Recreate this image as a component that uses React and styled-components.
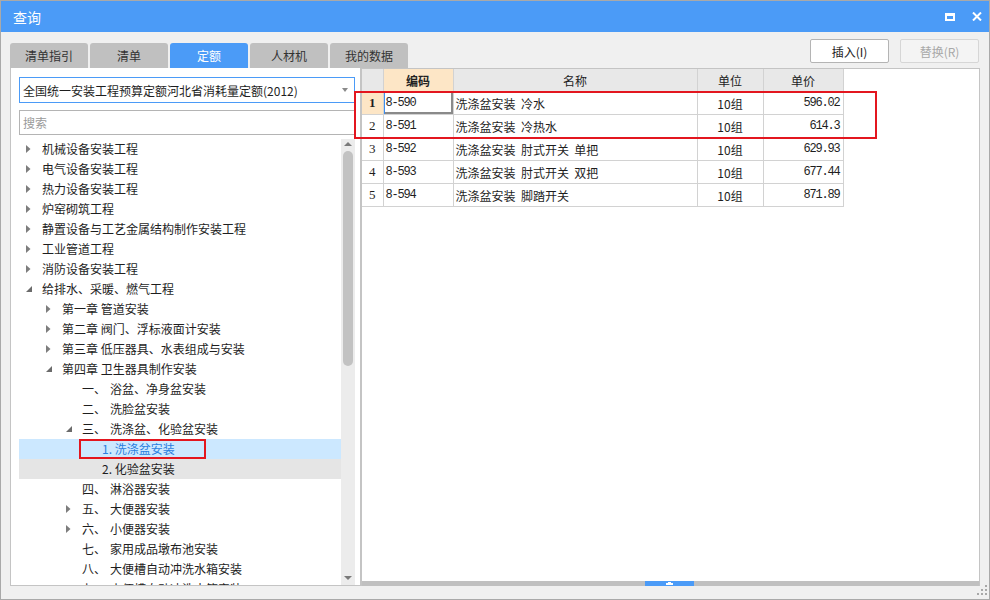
import styled, { createGlobalStyle } from "styled-components";

const GlobalStyle = createGlobalStyle`
  html, body {
    margin: 0;
    padding: 0;
    background: #fff;
  }
  body {
    font-family: "Noto Sans CJK SC", "Noto Sans", sans-serif;
    font-size: 12px;
    color: #1e1e1e;
  }
`;

const BLUE = "#4b9bf7";

const Window = styled.div`
  position: relative;
  width: 990px;
  height: 600px;
  box-sizing: border-box;
  border: 1px solid #a9a9a9;
  background: #f0f0f0;
  display: flex;
  flex-direction: column;
`;

const TitleBar = styled.div`
  height: 31px;
  flex-shrink: 0;
  background: ${BLUE};
  color: #fff;
  display: flex;
  align-items: center;
  justify-content: space-between;
  padding: 0 7px 0 12px;
  font-size: 14px;
`;

const TitleIcons = styled.div`
  display: flex;
  align-items: center;
  gap: 17px;
`;

const Body = styled.div`
  flex: 1;
  display: grid;
  grid-template-columns: 351px 619px;
  grid-template-rows: 36px 518px;
  padding: 0 8px 13px 9px;
`;

const Tabs = styled.div`
  display: flex;
  align-items: flex-end;
  gap: 2px;
  position: relative;
  z-index: 1;
`;

const Tab = styled.div`
  flex-shrink: 0;
  width: 78px;
  height: 25px;
  border-radius: 3px 3px 0 0;
  background: ${(p) => (p.$active ? BLUE : "#c0c0c0")};
  color: ${(p) => (p.$active ? "#fff" : "#333")};
  display: flex;
  align-items: center;
  justify-content: center;
  font-size: 12px;
`;

const Actions = styled.div`
  display: flex;
  justify-content: flex-end;
  align-items: flex-start;
  gap: 11px;
  padding: 7px 1px 0 0;
`;

const Button = styled.div`
  width: 79px;
  height: 24px;
  box-sizing: border-box;
  border: 1px solid ${(p) => (p.disabled ? "#d6d6d6" : "#b4b4b4")};
  border-radius: 2px;
  background: ${(p) => (p.disabled ? "#f4f4f4" : "#fff")};
  color: ${(p) => (p.disabled ? "#a8a8a8" : "#222")};
  display: flex;
  align-items: center;
  justify-content: center;
  font-size: 12px;
`;

const LeftPanel = styled.div`
  background: #fff;
  border: 1px solid #c4c4c4;
  border-top: none;
  display: flex;
  flex-direction: column;
  padding: 9px 5px 0 8px;
  min-height: 0;
`;

const Select = styled.div`
  height: 26px;
  box-sizing: border-box;
  border: 1px solid ${BLUE};
  display: flex;
  align-items: center;
  justify-content: space-between;
  padding: 0 6px 0 3px;
  font-size: 12px;
`;

const Caret = styled.span`
  width: 0;
  height: 0;
  border-left: 3.5px solid transparent;
  border-right: 3.5px solid transparent;
  border-top: 4px solid #8a8a8a;
`;

const Search = styled.input`
  margin-top: 7px;
  height: 25px;
  box-sizing: border-box;
  border: 1px solid #b4b4b4;
  padding: 0 3px;
  font-family: inherit;
  font-size: 12px;
  outline: none;
  &::placeholder {
    color: #9a9a9a;
  }
`;

const TreeArea = styled.div`
  margin-top: 4px;
  flex: 1;
  display: flex;
  min-height: 0;
  overflow: hidden;
`;

const TreeList = styled.div`
  flex: 1;
  overflow: hidden;
`;

const Row = styled.div`
  position: relative;
  height: 20px;
  display: flex;
  align-items: center;
  padding-left: ${(p) => p.$level * 20}px;
  background: ${(p) => (p.$selected ? "#cce8ff" : p.$hover ? "#e5e5e5" : "transparent")};
  color: ${(p) => (p.$selected ? "#2b7fe0" : "#1e1e1e")};
  white-space: nowrap;
  line-height: 20px;
`;

const Toggle = styled.span`
  width: 23px;
  height: 20px;
  flex-shrink: 0;
  display: flex;
  align-items: center;
  padding-left: 7px;
  box-sizing: border-box;
`;

const Prefix = styled.span`
  margin-right: 4px;
`;

const Marker = styled.div`
  position: absolute;
  left: 60px;
  top: 0;
  width: 127px;
  height: 20px;
  box-sizing: border-box;
  border: 2px solid #e3161f;
`;

const ScrollBar = styled.div`
  width: 14px;
  background: #ececec;
  display: flex;
  flex-direction: column;
  align-items: center;
`;

const Arrow = styled.span`
  width: 0;
  height: 0;
  border-left: 4px solid transparent;
  border-right: 4px solid transparent;
  ${(p) =>
    p.$down
      ? "border-top: 4px solid #7a7a7a; margin-bottom: 5px; margin-top: auto;"
      : "border-bottom: 4px solid #7a7a7a; margin-top: 3px;"}
`;

const Thumb = styled.div`
  margin-top: 5px;
  width: 10px;
  height: 215px;
  border-radius: 5px;
  background: #c2c2c2;
`;

const RightPanel = styled.div`
  position: relative;
  background: #fff;
  border: 1px solid #c4c4c4;
  border-bottom: none;
  display: flex;
  flex-direction: column;
  min-height: 0;
`;

const TableWrap = styled.div`
  flex: 1;
`;

const Grid = styled.table`
  border-collapse: collapse;
  table-layout: fixed;
  width: 481px;
  font-size: 12px;
`;

const Th = styled.th`
  height: 22px;
  padding: 0;
  border: 1px solid #d2d2d2;
  border-top: none;
  background: ${(p) => (p.$active ? "#fde6c6" : "#e8e8e8")};
  font-weight: ${(p) => (p.$active ? "bold" : "normal")};
  color: #222;
  &:first-child {
    border-left: none;
  }
`;

const Td = styled.td`
  height: 22px;
  padding: 0 ${(p) => (p.$align === "right" ? "3px" : "0")} 0 ${(p) => (p.$align === "left" ? "2px" : "0")};
  border: 1px solid #d2d2d2;
  text-align: ${(p) => p.$align || "center"};
  white-space: pre;
  overflow: hidden;
  box-shadow: ${(p) => (p.$focus ? "inset 1px 0 0 #3d8ef0, inset -2px -2px 0 #8a8a8a" : "none")};
  font-family: ${(p) => (p.$mono ? '"Liberation Mono", monospace' : "inherit")};
  font-size: 12px;
  letter-spacing: ${(p) => (p.$mono ? "-1.2px" : "0")};
`;

const NumCell = styled.td`
  height: 22px;
  padding: 0;
  border: 1px solid #d2d2d2;
  border-left: none;
  text-align: center;
  font-family: "Liberation Serif", serif;
  font-size: 13px;
  font-weight: ${(p) => (p.$active ? "bold" : "normal")};
  background: ${(p) => (p.$active ? "#fde6c6" : "#fff")};
`;

const GridMarker = styled.div`
  position: absolute;
  left: -8px;
  top: 22px;
  width: 523px;
  height: 48px;
  box-sizing: border-box;
  border: 2px solid #e3161f;
`;

const Splitter = styled.div`
  height: 5px;
  background: #c0c0c0;
  display: flex;
`;

const SplitHandle = styled.div`
  margin-left: 283px;
  width: 49px;
  background: ${BLUE};
  display: flex;
  align-items: center;
  justify-content: center;
`;

const Grip = styled.svg`
  position: absolute;
  right: 1px;
  bottom: 3px;
`;

const Collapsed = () => (
  <svg width="5" height="8" viewBox="0 0 5 8">
    <path d="M0 0 L4.5 4 L0 8 Z" fill="#7d7d7d" />
  </svg>
);

const Expanded = () => (
  <svg width="6" height="6" viewBox="0 0 6 6">
    <path d="M6 0 L6 6 L0 6 Z" fill="#6b6b6b" />
  </svg>
);

const tree = [
  { level: 0, state: "c", text: "机械设备安装工程" },
  { level: 0, state: "c", text: "电气设备安装工程" },
  { level: 0, state: "c", text: "热力设备安装工程" },
  { level: 0, state: "c", text: "炉窑砌筑工程" },
  { level: 0, state: "c", text: "静置设备与工艺金属结构制作安装工程" },
  { level: 0, state: "c", text: "工业管道工程" },
  { level: 0, state: "c", text: "消防设备安装工程" },
  { level: 0, state: "e", text: "给排水、采暖、燃气工程" },
  { level: 1, state: "c", text: "第一章 管道安装" },
  { level: 1, state: "c", text: "第二章 阀门、浮标液面计安装" },
  { level: 1, state: "c", text: "第三章 低压器具、水表组成与安装" },
  { level: 1, state: "e", text: "第四章 卫生器具制作安装" },
  { level: 2, prefix: "一、", text: "浴盆、净身盆安装" },
  { level: 2, prefix: "二、", text: "洗脸盆安装" },
  { level: 2, state: "e", prefix: "三、", text: "洗涤盆、化验盆安装" },
  { level: 3, text: "1. 洗涤盆安装", selected: true },
  { level: 3, text: "2. 化验盆安装", hover: true },
  { level: 2, prefix: "四、", text: "淋浴器安装" },
  { level: 2, state: "c", prefix: "五、", text: "大便器安装" },
  { level: 2, state: "c", prefix: "六、", text: "小便器安装" },
  { level: 2, prefix: "七、", text: "家用成品墩布池安装" },
  { level: 2, prefix: "八、", text: "大便槽自动冲洗水箱安装" },
  { level: 2, prefix: "九、", text: "小便槽自动冲洗水箱安装" },
];

const items = [
  { code: "8-590", name: "洗涤盆安装  冷水", unit: "10组", price: "596.02" },
  { code: "8-591", name: "洗涤盆安装  冷热水", unit: "10组", price: "614.3" },
  { code: "8-592", name: "洗涤盆安装  肘式开关  单把", unit: "10组", price: "629.93" },
  { code: "8-593", name: "洗涤盆安装  肘式开关  双把", unit: "10组", price: "677.44" },
  { code: "8-594", name: "洗涤盆安装  脚踏开关", unit: "10组", price: "871.89" },
];

const tabs = ["清单指引", "清单", "定额", "人材机", "我的数据"];

export default function App() {
  return (
    <>
      <GlobalStyle />
      <Window>
        <TitleBar>
          <span>查询</span>
          <TitleIcons>
            <svg width="10" height="8" viewBox="0 0 10 8">
              <rect x="0" y="0" width="10" height="3" fill="#fff" />
              <rect x="1" y="1" width="8" height="6" fill="none" stroke="#fff" strokeWidth="2" />
            </svg>
            <svg width="10" height="9" viewBox="0 0 10 9">
              <path d="M1 0.5 L9 8.5 M9 0.5 L1 8.5" stroke="#fff" strokeWidth="2" />
            </svg>
          </TitleIcons>
        </TitleBar>
        <Body>
          <Tabs>
            {tabs.map((t) => (
              <Tab key={t} $active={t === "定额"}>
                {t}
              </Tab>
            ))}
          </Tabs>
          <Actions>
            <Button>插入(I)</Button>
            <Button disabled>替换(R)</Button>
          </Actions>

          <LeftPanel>
            <Select>
              <span>全国统一安装工程预算定额河北省消耗量定额(2012)</span>
              <Caret />
            </Select>
            <Search placeholder="搜索" />
            <TreeArea>
              <TreeList>
                {tree.map((n, i) => (
                  <Row key={i} $level={n.level} $selected={n.selected} $hover={n.hover}>
                    <Toggle>
                      {n.state === "c" && <Collapsed />}
                      {n.state === "e" && <Expanded />}
                    </Toggle>
                    {n.prefix && <Prefix>{n.prefix}</Prefix>}
                    <span>{n.text}</span>
                    {n.selected && <Marker />}
                  </Row>
                ))}
              </TreeList>
              <ScrollBar>
                <Arrow />
                <Thumb />
                <Arrow $down />
              </ScrollBar>
            </TreeArea>
          </LeftPanel>

          <RightPanel>
            <TableWrap>
              <Grid>
                <colgroup>
                  <col style={{ width: 21 }} />
                  <col style={{ width: 70 }} />
                  <col style={{ width: 244 }} />
                  <col style={{ width: 66 }} />
                  <col style={{ width: 80 }} />
                </colgroup>
                <thead>
                  <tr>
                    <Th />
                    <Th $active>编码</Th>
                    <Th>名称</Th>
                    <Th>单位</Th>
                    <Th>单价</Th>
                  </tr>
                </thead>
                <tbody>
                  {items.map((it, i) => (
                    <tr key={it.code}>
                      <NumCell $active={i === 0}>{i + 1}</NumCell>
                      <Td $align="left" $mono $focus={i === 0}>
                        {it.code}
                      </Td>
                      <Td $align="left">{it.name}</Td>
                      <Td>{it.unit}</Td>
                      <Td $align="right" $mono>
                        {it.price}
                      </Td>
                    </tr>
                  ))}
                </tbody>
              </Grid>
            </TableWrap>
            <Splitter>
              <SplitHandle>
                <svg width="7" height="3" viewBox="0 0 7 3">
                  <path d="M2 0 H5 V1 H7 V3 H0 V1 H2 Z" fill="#fff" />
                </svg>
              </SplitHandle>
            </Splitter>
            <GridMarker />
          </RightPanel>
        </Body>
        <Grip width="11" height="11" viewBox="0 0 11 11">
          <rect x="8" y="0" width="2" height="2" fill="#a8a8a8" />
          <rect x="4" y="4" width="2" height="2" fill="#a8a8a8" />
          <rect x="8" y="4" width="2" height="2" fill="#a8a8a8" />
          <rect x="0" y="8" width="2" height="2" fill="#a8a8a8" />
          <rect x="4" y="8" width="2" height="2" fill="#a8a8a8" />
          <rect x="8" y="8" width="2" height="2" fill="#a8a8a8" />
        </Grip>
      </Window>
    </>
  );
}
